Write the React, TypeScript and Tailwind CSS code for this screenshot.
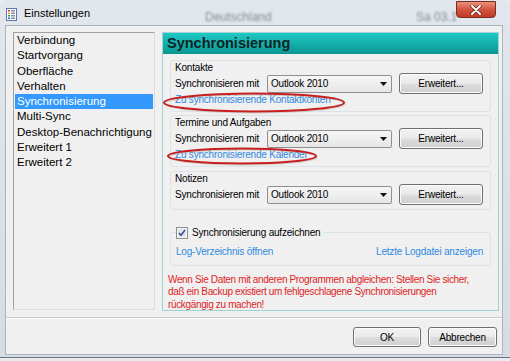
import React from 'react'

const btn =
  'flex items-center justify-center rounded-[3px] border border-[#707070] bg-[linear-gradient(to_bottom,#f2f2f2_0%,#ebebeb_48%,#dddddd_52%,#cfcfcf_100%)] shadow-[inset_0_0_0_1px_#fbfbfb] text-[10px] tracking-[-0.2px] text-black'

function SyncRow() {
  return (
    <div className="flex h-[21px] items-center">
      <span className="w-[92px] whitespace-nowrap">Synchronisieren mit</span>
      <div className="flex h-[18px] w-[125px] items-center justify-between rounded-[2px] border border-[#8e8f8f] bg-[linear-gradient(to_bottom,#f6f6f6,#e6e6e6)] pl-[3px] pr-[4px]">
        <span>Outlook 2010</span>
        <svg width="7" height="4" viewBox="0 0 7 4">
          <path d="M0 0 H7 L3.5 4 Z" fill="#111" />
        </svg>
      </div>
      <div className={`${btn} ml-[7px] h-[21px] w-[84px]`}>Erweitert...</div>
    </div>
  )
}

function Group({ title, link, className }: { title: string; link?: string; className: string }) {
  return (
    <div className={`mx-[7px] rounded-[3px] border border-[#dde2e6] pl-[4px] pt-[1px] ${className}`}>
      <div className="h-[11px] leading-[11px]">{title}</div>
      <SyncRow />
      {link && <div className="h-[12px] leading-[12px] text-[#2f8ae0]">{link}</div>}
    </div>
  )
}

export default function App() {
  const items = [
    'Verbindung',
    'Startvorgang',
    'Oberfläche',
    'Verhalten',
    'Synchronisierung',
    'Multi-Sync',
    'Desktop-Benachrichtigung',
    'Erweitert 1',
    'Erweitert 2',
  ]
  return (
    <div className="relative h-[361px] w-[510px] overflow-hidden bg-[#e9ebee] font-['Liberation_Sans',Arial,sans-serif]">
      <div className="flex h-[358px] w-[510px] flex-col rounded-t-[6px] border-b border-[#6b7480] bg-[linear-gradient(to_bottom,#e2e7ed,#d5dce4)]">
        {/* title bar */}
        <div className="flex h-[25px] items-start">
          <svg className="ml-[6px] mt-[8px]" width="11" height="13" viewBox="0 0 11 13">
            <rect x="0.5" y="0.5" width="10" height="12" fill="#fff" stroke="#5a78a8" />
            <rect x="2" y="2" width="2" height="1.5" fill="#e03030" />
            <rect x="2" y="4.5" width="2" height="1.5" fill="#f0a020" />
            <rect x="2" y="7" width="2" height="1.5" fill="#30a040" />
            <rect x="2" y="9.5" width="2" height="1.5" fill="#3060d0" />
            <rect x="5" y="2" width="4" height="1.5" fill="#8090b0" />
            <rect x="5" y="4.5" width="4" height="1.5" fill="#8090b0" />
            <rect x="5" y="7" width="4" height="1.5" fill="#8090b0" />
            <rect x="5" y="9.5" width="4" height="1.5" fill="#8090b0" />
          </svg>
          <span className="ml-[7px] mt-[7px] w-[181px] text-[11px] leading-[13px] text-black">Einstellungen</span>
          <span className="mt-[8px] w-[211px] whitespace-nowrap text-[12px] text-[#868b92] blur-[1.2px]">Deutschland</span>
          <span className="mt-[8px] w-[40px] overflow-hidden whitespace-nowrap text-[12px] text-[#868b92] blur-[1.2px]">Sa 03.1</span>
          <div className="mt-[1px] flex h-[17px] w-[40px] items-center justify-center rounded-b-[4px] border border-[#7d2a20] bg-[linear-gradient(to_bottom,#e8917c,#d2553f_50%,#c13a26_100%)]">
            <svg width="12" height="10" viewBox="0 0 12 10">
              <path d="M2 1 L10 9 M10 1 L2 9" stroke="#5a1a12" strokeWidth="3.2" strokeLinecap="round" />
              <path d="M2 1 L10 9 M10 1 L2 9" stroke="#fff" strokeWidth="2" strokeLinecap="round" />
            </svg>
          </div>
        </div>

        {/* client area */}
        <div className="mx-[5px] flex h-[330px] w-[498px] flex-col border border-[#aab4bf] bg-[#f0f0f0]">
          <div className="flex pl-[7px] pt-[6px]">
            {/* list */}
            <div className="h-[278px] w-[142px] border border-t-[#a0a0a0] border-l-[#a0a0a0] border-r-[#dcdcdc] border-b-[#dcdcdc] px-[1px] text-[11.5px] text-black">
              {items.map((it) => (
                <div
                  key={it}
                  className={`h-[15.3px] whitespace-nowrap pl-[2px] leading-[15.3px] ${
                    it === 'Synchronisierung' ? 'bg-[#3399ff] text-white' : ''
                  }`}
                >
                  {it}
                </div>
              ))}
            </div>

            {/* panel */}
            <div className="ml-[7px] h-[279px] w-[337px] border border-[#9fd2d4] text-[10px] tracking-[-0.2px] text-black">
              <div className="h-[21px] bg-[linear-gradient(to_bottom,#1ec9c4,#0b9691)] pl-[4px] text-[14.5px] font-bold leading-[21px] tracking-normal text-[#0c2424]">
                Synchronisierung
              </div>
              <Group title="Kontakte" link="Zu synchronisierende Kontaktkonten" className="mt-[6px] pb-[5px]" />
              <Group title="Termine und Aufgaben" link="Zu synchronisierende Kalender" className="mt-[3px] pb-[5px]" />
              <Group title="Notizen" className="mt-[4px] pb-[4px]" />

              <fieldset className="mx-[7px] mt-[16px] rounded-[3px] border border-[#dde2e6] pb-[7px] pl-[5px] pr-[7px]">
                <legend className="flex h-[13px] items-center pr-[3px]">
                  <svg width="12" height="12" viewBox="0 0 12 12">
                    <rect x="0.5" y="0.5" width="11" height="11" fill="#f5f5f5" stroke="#8e8f8f" />
                    <rect x="2" y="2" width="8" height="8" fill="#e2e7ee" />
                    <path d="M3 6 L5 8.3 L9 3" stroke="#3f4f88" strokeWidth="1.6" fill="none" />
                  </svg>
                  <span className="ml-[4px]">Synchronisierung aufzeichnen</span>
                </legend>
                <div className="mt-[7px] flex h-[12px] justify-between leading-[12px] text-[#2f8ae0]">
                  <span>Log-Verzeichnis öffnen</span>
                  <span>Letzte Logdatei anzeigen</span>
                </div>
              </fieldset>

              <div className="mt-[8px] whitespace-nowrap pl-[5px] leading-[12.3px] tracking-[-0.35px] text-[#de1f1f]">
                Wenn Sie Daten mit anderen Programmen abgleichen: Stellen Sie sicher,
                <br />
                daß ein Backup existiert um fehlgeschlagene Synchronisierungen
                <br />
                rückgängig zu machen!
              </div>
            </div>
          </div>

          <div className="mt-[6px] h-[2px] border-b border-t border-b-white border-t-[#c8c8c8]" />

          <div className="mt-[8px] flex justify-end pr-[5px]">
            <div className={`${btn} h-[20px] w-[68px]`}>OK</div>
            <div className={`${btn} ml-[7px] h-[20px] w-[69px]`}>Abbrechen</div>
          </div>
        </div>
      </div>

      {/* hand-drawn red marks over the dialog */}
      <svg className="absolute left-[160px] top-[90px]" width="190" height="26" viewBox="0 0 190 26">
        <ellipse cx="95" cy="13.5" rx="90" ry="9" fill="none" stroke="#9a9a9a" strokeOpacity="0.35" strokeWidth="2" />
        <ellipse cx="94" cy="12.5" rx="90" ry="9" fill="none" stroke="#c81e1e" strokeWidth="2" />
      </svg>
      <svg className="absolute left-[164px] top-[146px]" width="158" height="22" viewBox="0 0 158 22">
        <ellipse cx="79" cy="11" rx="74" ry="7.5" fill="none" stroke="#9a9a9a" strokeOpacity="0.35" strokeWidth="2" />
        <ellipse cx="78" cy="10" rx="74" ry="7.5" fill="none" stroke="#c81e1e" strokeWidth="2" />
      </svg>
    </div>
  )
}
